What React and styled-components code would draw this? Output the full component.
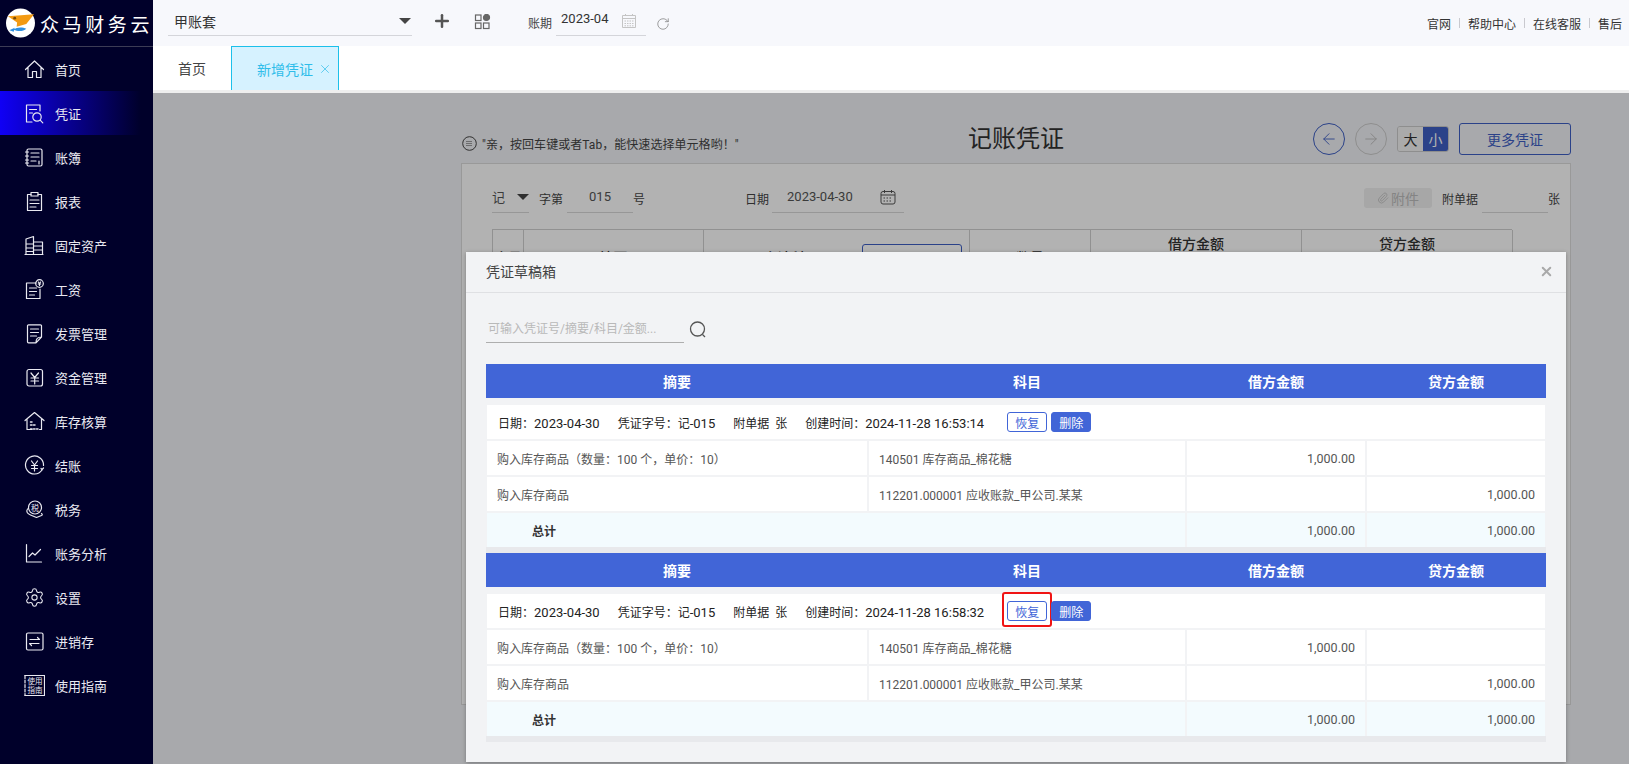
import styled, { createGlobalStyle } from "styled-components"
import { ArrowLeft, ArrowRight, Paperclip, Plus, RotateCw, Settings, X } from "lucide-react"

const GlobalStyle = createGlobalStyle`
  html, body, #root { margin: 0; height: 100%; }
  body {
    overflow: hidden;
    font-family: Roboto, "Noto Sans CJK SC", "Liberation Sans", sans-serif;
    color: #333;
  }
  * { box-sizing: border-box; }
`

const Page = styled.div`
  display: flex;
  height: 764px;
  width: 1629px;
`

const Sidebar = styled.aside`
  width: 153px;
  flex: none;
  background: #00002a;
`

const Brand = styled.div`
  display: flex;
  align-items: center;
  gap: 5px;
  height: 47px;
  padding-left: 6px;
  border-bottom: 1px solid #3c3c55;
`

const BrandName = styled.span`
  font-size: 19px;
  letter-spacing: 3.6px;
  color: #fff;
  white-space: nowrap;
`

const Menu = styled.nav`
  display: flex;
  flex-direction: column;
`

const MenuItem = styled.a`
  display: flex;
  align-items: center;
  height: 44px;
  padding: 0 0 0 24px;
  font-size: 13px;
  color: #e9e9f1;
  background: ${(p) => (p.$active ? "linear-gradient(90deg, #1000f5 0%, #00002a 92%)" : "transparent")};
  svg { flex: none; width: 21px; height: 21px; }
`

const MenuLabel = styled.span`
  margin-left: 10px;
`

const Content = styled.div`
  flex: 1;
  display: flex;
  flex-direction: column;
  min-width: 0;
`

const TopBar = styled.header`
  display: flex;
  align-items: center;
  height: 46px;
  flex: none;
  padding-left: 15px;
  background: #f7f8fc;
  font-size: 13px;
`

const AccountSelect = styled.div`
  display: flex;
  align-items: center;
  justify-content: space-between;
  width: 244px;
  height: 36px;
  margin-top: -11px;
  padding: 7px 1px 0 6px;
  border-bottom: 1px solid #d4d5da;
  font-size: 14px;
`

const Caret = styled.i`
  display: inline-block;
  border-left: 6px solid transparent;
  border-right: 6px solid transparent;
  border-top: 6px solid ${(p) => p.$color || "#444"};
`

const ToolIcon = styled.span`
  display: inline-flex;
  margin-left: ${(p) => p.$left}px;
  margin-top: ${(p) => p.$top || 0}px;
  color: ${(p) => p.$color || "#666"};
`

const PeriodLabel = styled.span`
  margin: -1px 4px 0 36px;
  font-size: 12px;
  color: #444;
`

const PeriodField = styled.div`
  display: flex;
  align-items: center;
  gap: 14px;
  width: 90px;
  height: 36px;
  margin-top: -11px;
  padding: 2px 0 0 5px;
  border-bottom: 1px solid #d4d5da;
  font-size: 13px;
  svg { margin-top: 5px; }
`

const Links = styled.div`
  display: flex;
  align-items: center;
  margin-left: auto;
  padding-right: 7px;
  font-size: 12px;
  color: #333;
`

const LinkSep = styled.i`
  width: 1px;
  height: 10px;
  margin: 0 8px;
  background: #c9c9cf;
`

const TabBar = styled.div`
  display: flex;
  height: 47px;
  flex: none;
  background: #fff;
  border-bottom: 3px solid #eeeeee;
`

const HomeTab = styled.div`
  display: flex;
  align-items: center;
  width: 78px;
  padding-left: 25px;
  font-size: 14px;
  color: #444;
`

const ActiveTab = styled.div`
  display: flex;
  align-items: center;
  gap: 5px;
  width: 108px;
  padding-left: 25px;
  background: #d6f2ff;
  border: 1px solid #1cc0ea;
  border-bottom: 0;
  font-size: 14px;
  color: #2fbdea;
`

const Main = styled.main`
  position: relative;
  flex: 1;
  overflow: hidden;
  padding: 30px 58px 0 308px;
  background: #f1f2f6;
`

const VoucherHead = styled.div`
  display: grid;
  grid-template-columns: 1fr auto 1fr;
  align-items: center;
  height: 32px;
`

const Hint = styled.div`
  display: flex;
  align-items: center;
  gap: 5px;
  margin: 9px 0 0 1px;
  font-size: 12px;
  letter-spacing: 0.05px;
  color: #444;
  white-space: nowrap;
`

const VoucherTitle = styled.h1`
  margin: 0;
  font-size: 24px;
  font-weight: 400;
  line-height: 32px;
  color: #333;
`

const HeadActions = styled.div`
  display: flex;
  justify-content: flex-end;
  align-items: center;
  gap: 10px;
`

const RoundButton = styled.button`
  display: flex;
  align-items: center;
  justify-content: center;
  width: 32px;
  height: 32px;
  padding: 0;
  border-radius: 50%;
  background: transparent;
  border: 1px solid ${(p) => (p.$muted ? "#ccc" : "#3e5fc4")};
  color: ${(p) => (p.$muted ? "#bbb" : "#3e5fc4")};
`

const SizeToggle = styled.div`
  display: flex;
  width: 52px;
  height: 26px;
  border: 1px solid #ccc;
  border-radius: 3px;
  overflow: hidden;
  font-size: 14px;
`

const SizeOption = styled.span`
  flex: 1;
  display: flex;
  align-items: center;
  justify-content: center;
  background: ${(p) => (p.$on ? "#3e5fc4" : "#f4f4f4")};
  color: ${(p) => (p.$on ? "#fff" : "#333")};
`

const MoreButton = styled.button`
  width: 112px;
  height: 32px;
  border: 1px solid #3e5fc4;
  border-radius: 3px;
  background: transparent;
  color: #3e5fc4;
  font: inherit;
  font-size: 14px;
`

const VoucherCard = styled.section`
  width: 1110px;
  height: 542px;
  margin-top: 8px;
  padding: 21px 10px 0 30px;
  background: #fff;
  border: 1px solid #dcdcdc;
`

const FormRow = styled.div`
  display: flex;
  align-items: flex-end;
  height: 28px;
  font-size: 12px;
  color: #444;
`

const FormLabel = styled.span`
  margin-left: ${(p) => p.$left || 0}px;
  margin-bottom: 6px;
  white-space: nowrap;
`

const FormField = styled.div`
  display: flex;
  align-items: center;
  justify-content: ${(p) => p.$justify || "center"};
  width: ${(p) => p.$width}px;
  height: 28px;
  margin-left: ${(p) => p.$left || 0}px;
  padding-bottom: 4px;
  border-bottom: 1px solid #d8d8d8;
  font-size: 13px;
  color: #555;
`

const DateValue = styled.span`
  margin-left: 15px;
`

const DateIcon = styled.svg`
  margin-left: 27px;
`

const AttachButton = styled.span`
  display: flex;
  align-items: center;
  justify-content: center;
  gap: 2px;
  width: 68px;
  height: 20px;
  margin: 0 0 5px auto;
  border-radius: 3px;
  background: #efefef;
  color: #bdbdbd;
  font-size: 14px;
`

const SheetHead = styled.div`
  display: grid;
  grid-template-columns: 31px 180px 266px 121px 211px 211px;
  width: 1020px;
  margin-top: 16px;
  border: 1px solid #d0d0d0;
  border-right: 0;
`

const SheetCell = styled.div`
  position: relative;
  display: flex;
  align-items: ${(p) => (p.$top ? "flex-start" : "center")};
  justify-content: ${(p) => (p.$inset ? "flex-start" : "center")};
  height: 54px;
  padding-top: ${(p) => (p.$top ? 3 : 0)}px;
  padding-left: ${(p) => p.$inset || 0}px;
  border-right: 1px solid #d0d0d0;
  font-size: 14px;
  font-weight: 500;
  color: #333;
`

const SheetPick = styled.div`
  position: absolute;
  top: 14px;
  right: 7px;
  width: 100px;
  height: 30px;
  border: 1px solid #3e5fc4;
  border-radius: 3px;
`

const Overlay = styled.div`
  position: absolute;
  inset: 0;
  background: rgba(0, 0, 0, 0.3);
`

const Modal = styled.div`
  position: absolute;
  left: 313px;
  top: 159px;
  width: 1100px;
  height: 510px;
  background: #f2f3f5;
  box-shadow: 0 1px 4px rgba(0, 0, 0, 0.3);
`

const ModalHeader = styled.div`
  display: flex;
  align-items: center;
  justify-content: space-between;
  height: 41px;
  padding: 0 12px 2px 20px;
  border-bottom: 1px solid #dfe0e3;
  font-size: 14px;
  color: #444;
`

const ModalBody = styled.div`
  padding: 0 20px;
`

const SearchRow = styled.div`
  display: flex;
  align-items: flex-end;
  gap: 4px;
  height: 50px;
`

const SearchInput = styled.div`
  width: 198px;
  height: 26px;
  padding: 2px 0 0 2px;
  border-bottom: 1px solid #aeaeae;
  font-size: 12px;
  line-height: 20px;
  color: #b9b9b9;
  white-space: nowrap;
`

const SearchIcon = styled.span`
  display: flex;
  margin-bottom: 4px;
  margin-left: 1px;
`

const DraftList = styled.div`
  margin-top: 21px;
`

const DraftHead = styled.div`
  display: grid;
  grid-template-columns: 382px 318px 180px 180px;
  height: 34px;
  background: #4165d7;
`

const DraftHeadCell = styled.div`
  display: flex;
  align-items: center;
  justify-content: center;
  font-size: 14px;
  font-weight: 700;
  color: #fff;
`

const DraftInfo = styled.div`
  display: flex;
  align-items: center;
  gap: 18px;
  height: 34px;
  margin: 7px 1px 2px;
  padding-left: 11px;
  background: #fff;
  font-size: 12px;
  color: #222;
  white-space: nowrap;
`

const Num = styled.span`
  font-size: 13px;
`

const RowButton = styled.button`
  position: relative;
  width: 40px;
  height: 20px;
  padding: 0;
  border: 1px solid #4165d7;
  border-radius: 3px;
  background: ${(p) => (p.$solid ? "#4165d7" : "#fff")};
  color: ${(p) => (p.$solid ? "#fff" : "#4165d7")};
  font: inherit;
  font-size: 12px;
  margin-left: ${(p) => p.$left || 0}px;

  ${(p) =>
    p.$marked &&
    `
    &::after {
      content: "";
      position: absolute;
      inset: -10px -6px -7px -6px;
      border: 2.5px solid #f01414;
      border-radius: 3px;
    }
  `}
`

const DraftRows = styled.div`
  display: grid;
  grid-template-columns: 380px 316px 178px 178px;
  grid-auto-rows: 34px;
  gap: 2px;
  margin: 0 1px;
`

const DraftCell = styled.div`
  display: flex;
  align-items: center;
  justify-content: ${(p) => (p.$right ? "flex-end" : "flex-start")};
  grid-column: span ${(p) => p.$span || 1};
  padding: ${(p) => (p.$right ? "0 10px 0 0" : "0 0 0 10px")};
  background: ${(p) => (p.$total ? "#f3fbfe" : "#fff")};
  font-size: ${(p) => (p.$right ? 12.5 : 12)}px;
  color: #555;
  white-space: nowrap;
`

const TotalLabel = styled.span`
  margin-left: 35px;
  font-weight: 700;
  color: #333;
`

const DraftFoot = styled.div`
  height: 6px;
  background: #e8e9ec;
`

const line = { fill: "none", stroke: "currentColor", strokeWidth: 1.2, strokeLinecap: "round", strokeLinejoin: "round" }

const Ico = ({ children }) => (
  <svg viewBox="0 0 21 21" {...line}>
    {children}
  </svg>
)

const tiny = { fontFamily: "'Noto Sans CJK SC', sans-serif", fill: "currentColor", stroke: "none", textAnchor: "middle" }

const menuItems = [
  { label: "首页", icon: <Ico><path d="M1.5 10.5 10.5 2l9 8.5M4 8.5V18.5h4.5v-6h4v6H17V8.5" /></Ico> },
  { label: "凭证", active: true, icon: <Ico><path d="M16 8V2H2.5v17H8M5.5 6.5h7M5.5 10h3" /><circle cx="13" cy="14" r="4.2" /><path d="m16.2 17.2 2.6 2.6" /></Ico> },
  { label: "账簿", icon: <Ico><rect x="3" y="2" width="15" height="17" rx="1.5" /><path d="M1.5 5h3M1.5 9h3M1.5 13h3M1.5 16h3M7 6h8M7 10h8M7 14h5M15 14v3" /></Ico> },
  { label: "报表", icon: <Ico><path d="M7 3.5H3.5V19.5h14V3.5H14" /><rect x="7" y="1.5" width="7" height="3.5" /><path d="M6 9h9M6 12.500h9M6 16h6" /></Ico> },
  { label: "固定资产", icon: <Ico><path d="M9.500 19.500V1.500L2 4v15.500M9.500 7h9v12.500M1 19.500h18M2 9h7.500M2 13h7.500M2 16.500h7.500M9.500 11h9M9.500 15h9" /></Ico> },
  { label: "工资", icon: <Ico><path d="M12 4H2.500v15.500H16V10" /><path d="M5.500 9h7M5.500 12.500h7M5.500 16h5" /><circle cx="15.500" cy="4.500" r="3.800" /><path d="m14.300 3 1.200 1.500L16.700 3M15.500 4.500V6.500M14.300 5h2.400" /></Ico> },
  { label: "发票管理", icon: <Ico><path d="M17.500 14V2.800a1 1 0 0 0-1-1H4.500a1 1 0 0 0-1 1v16a1 1 0 0 0 1 1H12zM12 19.800c0-4 1.500-5.800 5.500-5.800" /><path d="M6.500 6h8M6.500 9.500h8M6.500 13h6" /></Ico> },
  { label: "资金管理", icon: <Ico><rect x="3" y="2.500" width="15.500" height="16.500" rx="2" /><path d="m7 6 3.700 4.500L14.500 6M7 11h7.500M7 14h7.500M10.700 10.500V17" /></Ico> },
  { label: "库存核算", icon: <Ico><path d="M1 9.500 10.500 1.500 20 9.500M3 8v10.500h5M17.500 8v10.500h-2" /><path strokeDasharray="1.500 1.500" strokeWidth="1.500" d="M6.500 11h2M6.500 14h5M6.500 18h8" /></Ico> },
  { label: "结账", icon: <Ico><path d="M18 15A9 9 0 1 1 19.500 10.500" /><path d="m7.500 6 3 4 3-4M7.500 10.500h6M7.500 13.500h6M10.500 10v6M17 13.500l1 1 1.500-1.500" /></Ico> },
  { label: "税务", icon: <Ico><circle cx="11" cy="8.500" r="6.500" /><path d="M3.500 10c-2 3 .5 5 3 6l6 2.500 5-2c1-.5 1-1.500 0-2" /><text x="11" y="11.500" fontSize="8" {...tiny}>税</text></Ico> },
  { label: "账务分析", icon: <Ico><path d="M2.500 1.500v17.500h15" /><path d="m5 13.500 3.500-3.500 2.500 2 5.500-5.500" /></Ico> },
  { label: "设置", icon: <Settings strokeWidth={1.2} /> },
  { label: "进销存", icon: <Ico><rect x="2.500" y="2" width="16.500" height="17" rx="1.500" /><path d="M6 8.500h9.500l-2-2M15 12.500H5.500l2 2" /></Ico> },
  { label: "使用指南", icon: <svg viewBox="0 0 21 21" {...line}><path d="M1 .5h19.500v20H1" /><path d="M1 .5v20" strokeDasharray="3 1.500" /><text x="11" y="9" fontSize="7.500" {...tiny}>使用</text><text x="11" y="17.500" fontSize="7.500" {...tiny}>指南</text></svg> },
]

const drafts = [
  { time: "2024-11-28 16:53:14" },
  { time: "2024-11-28 16:58:32", marked: true },
]

const DraftSection = ({ time, marked }) => (
  <>
    <DraftHead>
      <DraftHeadCell>摘要</DraftHeadCell>
      <DraftHeadCell>科目</DraftHeadCell>
      <DraftHeadCell>借方金额</DraftHeadCell>
      <DraftHeadCell>贷方金额</DraftHeadCell>
    </DraftHead>
    <DraftInfo>
      <span>日期：<Num>2023-04-30</Num></span>
      <span>凭证字号：记<Num>-015</Num></span>
      <span>附单据&nbsp;&nbsp;张</span>
      <span>创建时间：<Num>{time}</Num></span>
      <RowButton $left={5} $marked={marked}>恢复</RowButton>
      <RowButton $solid $left={-14}>删除</RowButton>
    </DraftInfo>
    <DraftRows>
      <DraftCell>购入库存商品（数量：100 个，单价：10）</DraftCell>
      <DraftCell>140501 库存商品_棉花糖</DraftCell>
      <DraftCell $right>1,000.00</DraftCell>
      <DraftCell $right />
      <DraftCell>购入库存商品</DraftCell>
      <DraftCell>112201.000001 应收账款_甲公司.某某</DraftCell>
      <DraftCell $right />
      <DraftCell $right>1,000.00</DraftCell>
      <DraftCell $total $span={2}><TotalLabel>总计</TotalLabel></DraftCell>
      <DraftCell $total $right>1,000.00</DraftCell>
      <DraftCell $total $right>1,000.00</DraftCell>
    </DraftRows>
    <DraftFoot />
  </>
)

const App = () => {
  return (
    <Page>
      <GlobalStyle />
      <Sidebar>
        <Brand>
          <svg width="30" height="30" viewBox="0 0 30 30">
            <circle cx="15" cy="15" r="15" fill="#fff" />
            <path d="M2 8 29 6l-8 10-10 3 .5-4.500z" fill="#f39a13" />
            <circle cx="9" cy="10" r="1.500" fill="#7a4a08" />
            <path d="M8 22c3-3 9-3 13-1-3 3-9 3-13 1zM3.500 22.500 9 20l-1 4z" fill="#2f8fe0" />
          </svg>
          <BrandName>众马财务云</BrandName>
        </Brand>
        <Menu>
          {menuItems.map((item) => (
            <MenuItem key={item.label} $active={item.active}>
              {item.icon}
              <MenuLabel>{item.label}</MenuLabel>
            </MenuItem>
          ))}
        </Menu>
      </Sidebar>

      <Content>
        <TopBar>
          <AccountSelect>
            甲账套
            <Caret />
          </AccountSelect>
          <ToolIcon $left={20} $top={-4} $color="#555">
            <Plus size={20} strokeWidth={3} />
          </ToolIcon>
          <ToolIcon $left={22} $top={-2}>
            <svg width="18" height="16" viewBox="0 0 18 16" fill="none" stroke="currentColor" strokeWidth="1.2">
              <rect x="1.500" y="1" width="5.500" height="5.500" />
              <circle cx="12.500" cy="3.500" r="3" fill="currentColor" />
              <rect x="1.500" y="9" width="5.500" height="5.500" />
              <rect x="9.500" y="9" width="5.500" height="5.500" />
            </svg>
          </ToolIcon>
          <PeriodLabel>账期</PeriodLabel>
          <PeriodField>
            2023-04
            <svg width="14" height="15" viewBox="0 0 14 15" fill="none" stroke="#c4c4c4" strokeWidth="1">
              <path d="M.500 2.500h13v12H.500zM.500 5.500h13M3.500 1v2M10.500 1v2" />
              <path strokeDasharray="1.500 1" d="M2.500 8h9M2.500 10.500h9M2.500 12.800h9" />
            </svg>
          </PeriodField>
          <ToolIcon $left={10} $top={2} $color="#777">
            <RotateCw size={14} strokeWidth={1.2} />
          </ToolIcon>
          <Links>
            官网<LinkSep />帮助中心<LinkSep />在线客服<LinkSep />售后
          </Links>
        </TopBar>

        <TabBar>
          <HomeTab>首页</HomeTab>
          <ActiveTab>
            新增凭证
            <X size={14} strokeWidth={1.2} />
          </ActiveTab>
        </TabBar>

        <Main>
          <VoucherHead>
            <Hint>
              <svg width="15" height="15" viewBox="0 0 15 15" fill="none" stroke="#444" strokeWidth="1">
                <circle cx="7.500" cy="7.500" r="6.800" />
                <path d="M4.500 5.500h6M4.500 7.500h6M4.500 9.500h6" strokeDasharray="1 1" />
              </svg>
              "亲，按回车键或者Tab，能快速选择单元格哟！"
            </Hint>
            <VoucherTitle>记账凭证</VoucherTitle>
            <HeadActions>
              <RoundButton><ArrowLeft size={18} strokeWidth={1.2} /></RoundButton>
              <RoundButton $muted><ArrowRight size={18} strokeWidth={1.2} /></RoundButton>
              <SizeToggle>
                <SizeOption>大</SizeOption>
                <SizeOption $on>小</SizeOption>
              </SizeToggle>
              <MoreButton>更多凭证</MoreButton>
            </HeadActions>
          </VoucherHead>

          <VoucherCard>
            <FormRow>
              <FormField $width={37} $justify="space-between">
                记<Caret />
              </FormField>
              <FormLabel $left={10}>字第</FormLabel>
              <FormField $width={66} $left={4}>015</FormField>
              <FormLabel>号</FormLabel>
              <FormLabel $left={100}>日期</FormLabel>
              <FormField $width={132} $left={3} $justify="flex-start">
                <DateValue>2023-04-30</DateValue>
                <DateIcon width="16" height="16" viewBox="0 0 16 16" fill="none" stroke="#555" strokeWidth="1">
                  <rect x="1" y="2.500" width="14" height="12.500" rx="2" />
                  <path d="M1 6h14M4.500 1v3M11.500 1v3" />
                  <path strokeDasharray="1.500 1.500" d="M3.500 9h9M3.500 12h9" />
                </DateIcon>
              </FormField>
              <AttachButton>
                <Paperclip size={12} strokeWidth={1.5} />
                附件
              </AttachButton>
              <FormLabel $left={10}>附单据</FormLabel>
              <FormField $width={66} $left={4} />
              <FormLabel>张</FormLabel>
            </FormRow>

            <SheetHead>
              <SheetCell>序号</SheetCell>
              <SheetCell>摘要</SheetCell>
              <SheetCell $inset={59}>
                会计科目
                <SheetPick />
              </SheetCell>
              <SheetCell>数量</SheetCell>
              <SheetCell $top>借方金额</SheetCell>
              <SheetCell $top>贷方金额</SheetCell>
            </SheetHead>
          </VoucherCard>

          <Overlay />

          <Modal>
            <ModalHeader>
              凭证草稿箱
              <X size={15} strokeWidth={3.2} color="#a9a9a9" />
            </ModalHeader>
            <ModalBody>
              <SearchRow>
                <SearchInput>可输入凭证号/摘要/科目/金额...</SearchInput>
                <SearchIcon>
                  <svg width="18" height="18" viewBox="0 0 18 18" fill="none" stroke="#555" strokeWidth="1.300">
                    <circle cx="8.500" cy="8" r="7" />
                    <path d="m13.500 13.500 2.500 2.500" />
                  </svg>
                </SearchIcon>
              </SearchRow>
              <DraftList>
                {drafts.map((draft) => (
                  <DraftSection key={draft.time} {...draft} />
                ))}
              </DraftList>
            </ModalBody>
          </Modal>
        </Main>
      </Content>
    </Page>
  )
}

export default App
